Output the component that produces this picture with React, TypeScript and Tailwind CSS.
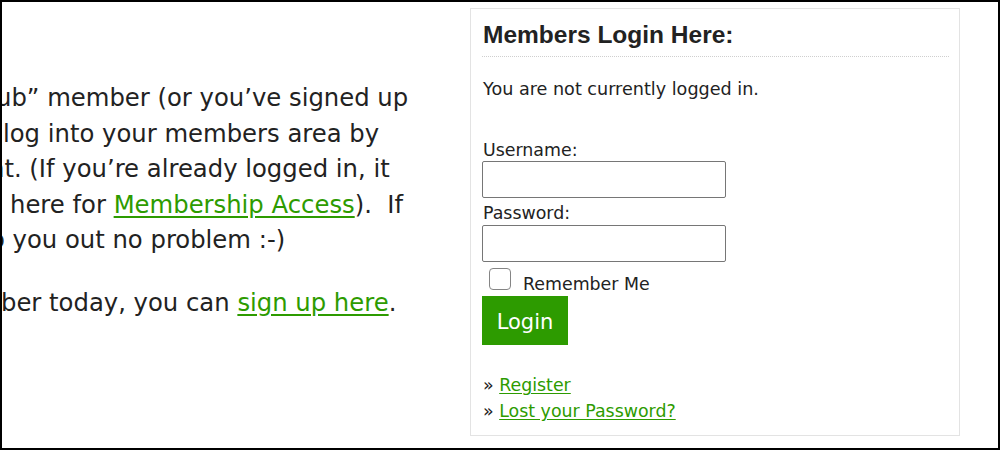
import React from "react";

const body = "font-['DejaVu_Sans',Verdana,sans-serif]";

export default function App() {
  return (
    <div className={`w-[1000px] h-[450px] border-2 border-black bg-white flex overflow-hidden text-[#222] ${body}`}>
      {/* Intro text, clipped on the left */}
      <div className="w-[466px] shrink-0 overflow-hidden pt-[78px] text-[24.3px] leading-[35.5px] whitespace-nowrap">
        <p>
          <span className="block ml-[-6px]">ub” member (or you’ve signed up</span>
          <span className="block ml-[1px]">log into your members area by</span>
          <span className="block ml-[-13px]">nt. (If you’re already logged in, it</span>
          <span className="block ml-[8px]">
            here for{" "}
            <a href="#" className="text-[#2d9b00] underline underline-offset-[3px]">
              Membership Access
            </a>
            ).&nbsp;&nbsp;If
          </span>
          <span className="block ml-[-12px]">o you out no problem :-)</span>
        </p>
        <p className="mt-[27px] ml-[-1px]">
          ber today, you can{" "}
          <a href="#" className="text-[#2d9b00] underline underline-offset-[3px]">
            sign up here
          </a>
          .
        </p>
      </div>

      {/* Login widget */}
      <div className="mt-[6px] ml-[2px] w-[490px] self-start border border-[#e3e3e3] pt-[12px] pl-[11px] pr-[10px] pb-[11px] text-[17.4px] leading-[22px]">
        <h3 className="font-['Liberation_Sans',Arial,sans-serif] font-bold text-[24.5px] leading-[28px] pl-[1px] pb-[7px] border-b border-dotted border-[#cfcfcf]">
          Members Login Here:
        </h3>
        <p className="mt-[21px] pl-[1px] text-[17.6px]">You are not currently logged in.</p>

        <form className="mt-[39px]" onSubmit={(e) => e.preventDefault()}>
          <label className="block pl-[1px]">Username:</label>
          <input
            type="text"
            className="block w-[244px] h-[37px] border border-[#767676] rounded-[2px] bg-white"
          />
          <label className="block pl-[1px] mt-[4px]">Password:</label>
          <input
            type="password"
            className="block w-[244px] h-[37px] mt-[1px] border border-[#767676] rounded-[2px] bg-white"
          />
          <div className="flex items-start">
            <input
              type="checkbox"
              className="appearance-none ml-[7px] mt-[6px] w-[22px] h-[22px] border border-[#858585] rounded-[4px] bg-white"
            />
            <span className="ml-[12px] mt-[11px]">Remember Me</span>
          </div>
          <button
            type="submit"
            className="block mt-[1px] w-[86px] h-[49px] pt-[3px] bg-[#2d9b00] text-white text-[21px]"
          >
            Login
          </button>
        </form>

        <ul className="mt-[27px] pl-[1px] leading-[26px]">
          <li>
            »{" "}
            <a href="#" className="text-[#2d9b00] underline underline-offset-[2px]">
              Register
            </a>
          </li>
          <li>
            »{" "}
            <a href="#" className="text-[#2d9b00] underline underline-offset-[2px]">
              Lost your Password?
            </a>
          </li>
        </ul>
      </div>
    </div>
  );
}
